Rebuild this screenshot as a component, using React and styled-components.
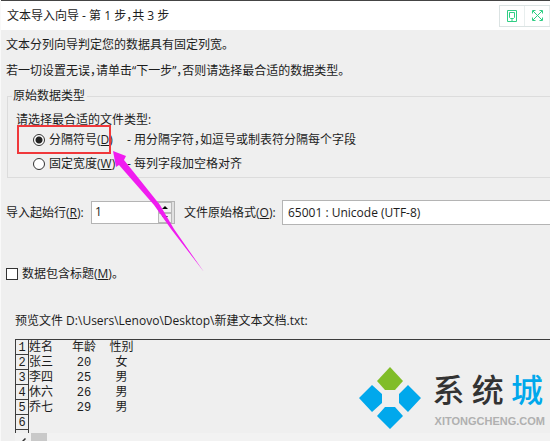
import React, { useState } from 'react';
import styled, { createGlobalStyle } from 'styled-components';

const GlobalStyle = createGlobalStyle`
* {
    box-sizing: border-box;
}
body {
    margin: 0;
    overflow: hidden;
    background: #efefef;
    color: #1c1c1c;
    font-family: 'Open Sans', 'Noto Sans CJK SC', sans-serif;
    font-size: 12px;
    line-height: 16px;
    font-feature-settings: 'halt';
}
button, input, select {
    font: inherit;
    color: inherit;
    margin: 0;
    padding: 0;
}
`;

const Dialog = styled.div`
position: relative;
border-left: 1px solid #f9f9f9;
`;

const TitleBar = styled.header`
display: flex;
align-items: center;
justify-content: space-between;
height: 30px;
padding-left: 6px;
border-top: 1px solid #444;
background: #fff;
`;

const Title = styled.h1`
margin: 0;
font-size: 12px;
font-weight: normal;
`;

const TitleTools = styled.div`
display: flex;
border: 1px solid #dbe3e3;
border-right: none;
`;

const ToolButton = styled.button`
display: flex;
align-items: center;
justify-content: center;
width: 25px;
height: 20px;
border: none;
border-right: 1px solid #e8eeee;
background: #fff;
color: #2fce84;
`;

const Content = styled.main`
display: flex;
flex-direction: column;
padding: 7px 0 0 5px;
`;

const Line = styled.p`
margin: 0 0 10px;
white-space: nowrap;
`;

const Group = styled.fieldset`
position: relative;
min-width: 0;
margin: -1px 0 0 1px;
padding: 8px 0 5px 8px;
border: 1px solid #dcdcdc;
border-right: none;

legend {
    margin-left: -4px;
    padding: 0 2px 0 1px;
}
`;

const Options = styled.div`
display: grid;
gap: 8px;
margin-top: 4px;
padding-left: 17px;
`;

const Option = styled.div`
display: grid;
grid-template-columns: 16px 78px 1fr;
align-items: center;
white-space: nowrap;
`;

const Radio = styled.input`
appearance: none;
width: 12px;
height: 12px;
border: 1px solid #333;
border-radius: 50%;
background: #fff;

&:checked {
    background: radial-gradient(circle, #222 0 3px, #fff 4px);
}
`;

const Highlight = styled.div`
position: absolute;
left: 9px;
top: 21px;
width: 94px;
height: 29px;
border: 2px solid #f0383b;
pointer-events: none;
`;

const Fields = styled.div`
display: flex;
align-items: center;
margin-top: 22px;
white-space: nowrap;
`;

const FieldLabel = styled.label`
flex: none;
width: ${(p) => p.$width};
`;

const Spinner = styled.div`
display: flex;
flex: none;
width: 84px;
height: 23px;
margin-right: 9px;
border: 1px solid #b4b4b4;
background: #fff;

input {
    flex: 1;
    min-width: 0;
    padding: 0 3px 2px;
    border: none;
    outline: none;
    background: transparent;
}
`;

const SpinButtons = styled.div`
display: grid;
grid-template-rows: 1fr 1fr;
width: 16px;
padding-right: 2px;
background: #e0e0e0;

button {
    display: flex;
    align-items: center;
    justify-content: center;
    min-height: 0;
    border: 1px solid #b8b8b8;
    background: #efefef;
}
svg {
    flex: none;
}
`;

const Format = styled.select`
appearance: none;
flex: 1;
min-width: 0;
height: 25px;
padding-left: 5px;
border: 1px solid #b4b4b4;
border-right: none;
border-radius: 0;
background: #fff;
`;

const CheckRow = styled.div`
display: flex;
align-items: center;
gap: 4px;
margin-top: 41px;
`;

const Checkbox = styled.input`
appearance: none;
width: 12px;
height: 12px;
border: 1px solid #333;
background: #fff;

&:checked {
    background: #333;
    box-shadow: inset 0 0 0 2px #fff;
}
`;

const PreviewTitle = styled.h2`
margin: 31px 0 10px 9px;
font-size: 12px;
font-weight: normal;
white-space: nowrap;
`;

const Preview = styled.section`
position: relative;
margin-left: 9px;
`;

const Viewport = styled.div`
height: 94px;
overflow: hidden;
border-top: 1px solid #3c3c3c;
`;

const Table = styled.table`
height: 102px;
border-collapse: collapse;
font-family: 'Liberation Mono', 'Noto Sans CJK SC', monospace;
font-size: 12px;
line-height: 12px;

tr {
    height: 14px;
}
th, td {
    padding: 2px 0 0;
    font-weight: normal;
    text-align: center;
}
th {
    width: 13px;
    border: 1px solid #3c3c3c;
    border-top: none;
}
td:nth-child(2) {
    width: 26px;
    text-align: left;
}
td:nth-child(3) {
    width: 55px;
    padding-left: 4px;
}
td:nth-child(4) {
    min-width: 24px;
}
`;

const ScrollBar = styled.div`
display: flex;
height: 17px;
background: #f2f2f2;

button {
    display: flex;
    align-items: center;
    justify-content: center;
    width: 16px;
    border: none;
    background: transparent;
}
`;

const Thumb = styled.div`
width: 16px;
background: #c9c9c9;
`;

const Brand = styled.div`
position: absolute;
right: 5px;
top: 27px;
display: flex;
align-items: flex-start;
gap: 13px;
`;

const BrandText = styled.div`
color: #b0b0b0;
font-family: 'Liberation Sans', sans-serif;
font-size: 11px;
font-weight: bold;
line-height: 12px;
`;

const BrandName = styled.div`
display: flex;
justify-content: space-between;
margin: -1px 2px 4px -2px;
color: #333;
font-family: 'Noto Sans CJK SC', sans-serif;
font-size: 32px;
font-weight: 500;
line-height: 46px;
`;

const BrandAccent = styled.span`
color: #00a8ec;
`;

const Arrow = styled.svg`
position: absolute;
left: 111px;
top: 151px;
pointer-events: none;
`;

const people = [
    ['姓名', '年龄', '性别'],
    ['张三', '20', '女'],
    ['李四', '25', '男'],
    ['休六', '26', '男'],
    ['乔七', '29', '男'],
    ['', '', ''],
    ['', '', ''],
];

const fileTypes = [
    { id: 'delimited', name: '分隔符号', accessKey: 'D', note: '- 用分隔字符\uff0c如逗号或制表符分隔每个字段' },
    { id: 'fixed', name: '固定宽度', accessKey: 'W', note: '- 每列字段加空格对齐' },
];

export default function App() {
    const [fileType, setFileType] = useState('delimited');
    const [startRow, setStartRow] = useState(1);
    const [hasHeader, setHasHeader] = useState(false);

    return (
        <Dialog>
            <GlobalStyle />
            <TitleBar>
                <Title>{'文本导入向导 - 第 1 步\uff0c共 3 步'}</Title>
                <TitleTools>
                    <ToolButton type="button" aria-label="设备">
                        <svg width="10" height="12" viewBox="0 0 10 12" fill="none" stroke="currentColor">
                            <path d="M.5 .5h9v11h-9zM2.5 2.5h5v5l-1 1h-3l-1-1z" />
                            <path d="M4 10h2" />
                        </svg>
                    </ToolButton>
                    <ToolButton type="button" aria-label="全屏">
                        <svg width="11" height="11" viewBox="0 0 11 11" fill="none" stroke="currentColor">
                            <path d="M.5 3.5v-3h3M7.5 .5h3v3M10.5 7.5v3h-3M3.5 10.5h-3v-3M1 1l9 9M10 1l-9 9" />
                        </svg>
                    </ToolButton>
                </TitleTools>
            </TitleBar>

            <Content>
                <Line>文本分列向导判定您的数据具有固定列宽。</Line>
                <Line>{'若一切设置无误\uff0c请单击“下一步”\uff0c否则请选择最合适的数据类型。'}</Line>

                <Group>
                    <legend>原始数据类型</legend>
                    <div>请选择最合适的文件类型:</div>
                    <Options>
                        {fileTypes.map((type) => (
                            <Option key={type.id}>
                                <Radio
                                    type="radio"
                                    name="fileType"
                                    id={type.id}
                                    checked={fileType === type.id}
                                    onChange={() => setFileType(type.id)}
                                />
                                <label htmlFor={type.id}>{type.name}(<u>{type.accessKey}</u>)</label>
                                <span>{type.note}</span>
                            </Option>
                        ))}
                    </Options>
                    <Highlight />
                </Group>

                <Fields>
                    <FieldLabel htmlFor="startRow" $width="85px">导入起始行(<u>R</u>):</FieldLabel>
                    <Spinner>
                        <input
                            id="startRow"
                            type="text"
                            inputMode="numeric"
                            value={startRow}
                            onChange={(e) => setStartRow(Number(e.target.value) || 1)}
                        />
                        <SpinButtons>
                            <button type="button" aria-label="增加" onClick={() => setStartRow(startRow + 1)}>
                                <svg width="6" height="3"><path d="M0 3L3 0L6 3z" /></svg>
                            </button>
                            <button type="button" aria-label="减少" onClick={() => setStartRow(Math.max(1, startRow - 1))}>
                                <svg width="6" height="3"><path d="M0 0L3 3L6 0z" /></svg>
                            </button>
                        </SpinButtons>
                    </Spinner>
                    <FieldLabel htmlFor="format" $width="98px">文件原始格式(<u>O</u>):</FieldLabel>
                    <Format id="format">
                        <option>65001 : Unicode (UTF-8)</option>
                    </Format>
                </Fields>

                <CheckRow>
                    <Checkbox
                        type="checkbox"
                        id="hasHeader"
                        checked={hasHeader}
                        onChange={(e) => setHasHeader(e.target.checked)}
                    />
                    <label htmlFor="hasHeader">数据包含标题(<u>M</u>)。</label>
                </CheckRow>

                <PreviewTitle>预览文件 D:\Users\Lenovo\Desktop\新建文本文档.txt:</PreviewTitle>
                <Preview>
                    <Viewport>
                        <Table>
                            <tbody>
                                {people.map((row, i) => (
                                    <tr key={i}>
                                        <th scope="row">{i < 6 ? i + 1 : ''}</th>
                                        {row.map((cell, j) => <td key={j}>{cell}</td>)}
                                    </tr>
                                ))}
                            </tbody>
                        </Table>
                    </Viewport>
                    <ScrollBar>
                        <button type="button" aria-label="向左滚动">
                            <svg width="5" height="8" fill="none" stroke="#333" strokeWidth="1.5"><path d="M4.5 .5L1 4L4.5 7.5" /></svg>
                        </button>
                        <Thumb />
                    </ScrollBar>
                    <Brand>
                        <svg width="64" height="64" viewBox="0 0 64 64">
                            <path fill="#80bd28" d="M32 1L45 15L37 24H27L19 15z" />
                            <path fill="#00a8ec" d="M14 19L24 28V37L14 46L1 32zM50 19L63 32L50 46L41 37V28zM27 41H37L45 50L32 63L19 50z" />
                        </svg>
                        <BrandText>
                            <BrandName>
                                <span>系</span>
                                <span>统</span>
                                <BrandAccent>城</BrandAccent>
                            </BrandName>
                            XITONGCHENG.COM
                        </BrandText>
                    </Brand>
                </Preview>
            </Content>

            <Arrow width="94" height="124" viewBox="0 0 94 124">
                <path fill="#f01cf0" d="M1 0L14 5L12 9L48 54L62 78L92 121L59 78L42 54L7 14L4 16z" />
            </Arrow>
        </Dialog>
    );
}
